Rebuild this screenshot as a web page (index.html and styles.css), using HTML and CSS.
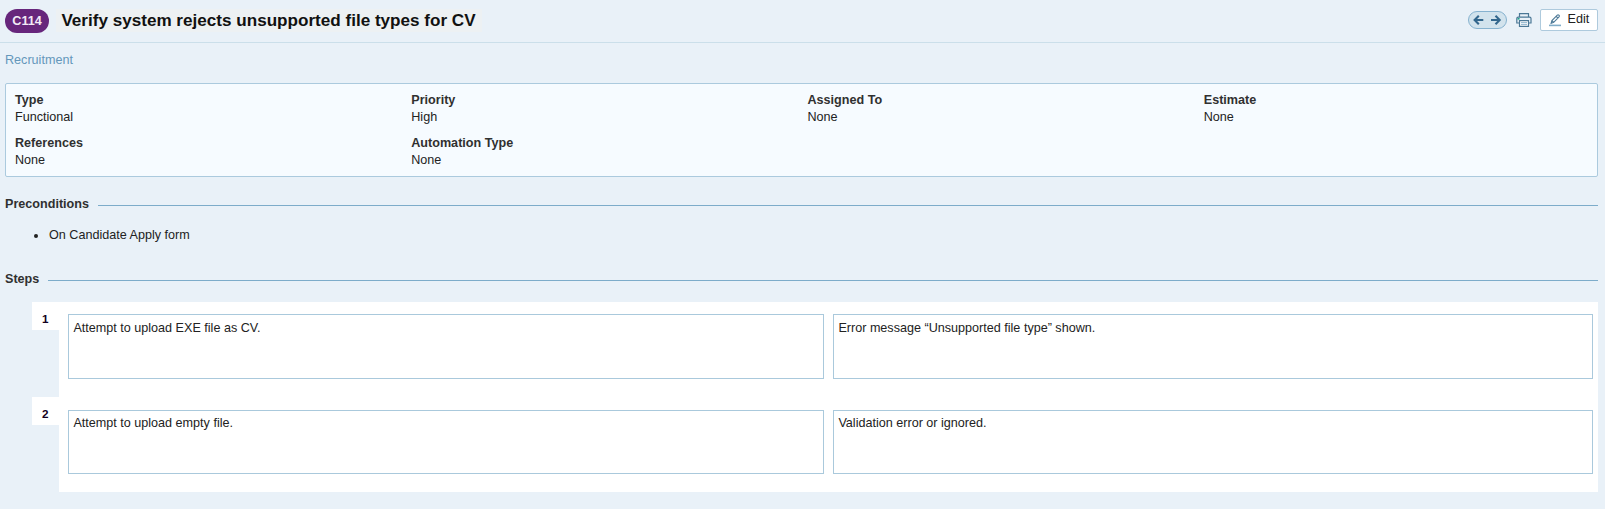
FILE: index.html
```html
<!DOCTYPE html>
<html lang="en">
<head>
<meta charset="utf-8">
<title>Verify system rejects unsupported file types for CV</title>
<link rel="stylesheet" href="styles.css">
</head>
<body>
<header class="header">
  <span class="badge">C114</span>
  <h1 class="title">Verify system rejects unsupported file types for CV</h1>
  <div class="toolbar">
    <div class="pager">
      <svg width="37" height="16" viewBox="0 0 37 16" fill="none" stroke="#33678d" stroke-width="2.1"><path d="M14.3 8H6.2M9.8 3.7 5.6 8l4.2 4.3M22 8h8.1M26.5 3.7 30.7 8l-4.2 4.3"/></svg>
    </div>
    <svg class="printer" width="16" height="16" viewBox="0 0 16 16" fill="none" stroke="#4b7896" stroke-width="1.2"><path d="M3.5 5V1.6h9V5M3.5 11H.8V6.6Q.8 5.2 2.2 5.2h11.4Q15 5.2 15 6.6V11h-2.5"/><path fill="#fff" d="M3.5 8.6h9v5.8h-9z"/><path stroke="#9bbdd3" d="M5 10.5h6M5 12.3h6"/><path stroke="#16a085" stroke-width="1.5" d="M1.6 6.8h2"/></svg>
    <button class="edit"><svg width="14" height="14" viewBox="0 0 14 14" fill="none" stroke="#4b7896" stroke-width="1.1"><path d="M2.1 9.3 2.9 6.5 8.3 1.1q.8-.6 1.6.1t.1 1.6L4.7 8.3zM7.2 2.3l1.7 1.7M2.9 6.5l1.8 1.8"/><path stroke="#82adc9" stroke-width="1.6" d="M0 11.4h12"/></svg><span>Edit</span></button>
  </div>
</header>
<main class="content">
  <a class="section-link">Recruitment</a>
  <dl class="details">
    <div><dt>Type</dt><dd>Functional</dd></div>
    <div><dt>Priority</dt><dd>High</dd></div>
    <div><dt>Assigned To</dt><dd>None</dd></div>
    <div><dt>Estimate</dt><dd>None</dd></div>
    <div><dt>References</dt><dd>None</dd></div>
    <div><dt>Automation Type</dt><dd>None</dd></div>
  </dl>
  <h2 class="heading">Preconditions</h2>
  <ul class="conditions"><li>On Candidate Apply form</li></ul>
  <h2 class="heading">Steps</h2>
  <section class="steps">
    <div class="step first">
      <div class="number">1</div>
      <div class="fields"><div class="field">Attempt to upload EXE file as CV.</div><div class="field">Error message “Unsupported file type” shown.</div></div>
    </div>
    <div class="step">
      <div class="number">2</div>
      <div class="fields"><div class="field">Attempt to upload empty file.</div><div class="field">Validation error or ignored.</div></div>
    </div>
  </section>
</main>
</body>
</html>
```
FILE: styles.css
```css
* { box-sizing: border-box; }
body {
  margin: 0;
  background: #e9f1f8;
  color: #222;
  font: 12.6px/17px "Liberation Sans", Arial, sans-serif;
}
.header {
  display: flex;
  align-items: flex-start;
  height: 43px;
  padding: 9px 7px 0 5px;
  border-bottom: 1px solid #cbdfea;
}
.badge {
  width: 44px;
  height: 24px;
  border-radius: 12px;
  background: #67267c;
  color: #f3eaf6;
  font-weight: bold;
  line-height: 24px;
  text-align: center;
}
.title {
  height: 23px;
  margin: 0 0 0 7px;
  padding: 0 6px 0 5.4px;
  background: #edf1f3;
  color: #111;
  font-size: 17.1px;
  line-height: 23px;
  white-space: nowrap;
}
.toolbar { display: flex; margin-left: auto; }
.pager {
  width: 39px;
  height: 18px;
  margin-top: 2px;
  border: 1px solid #86b2cf;
  border-radius: 9px;
  background: #d2e3ed;
}
.pager svg, .printer { display: block; }
.printer { margin: 3px 8px 0 9px; }
.edit {
  display: flex;
  width: 58px;
  height: 22px;
  padding: 0 0 0 8px;
  border: 1px solid #aecadd;
  border-radius: 2px;
  background: #fff;
  color: #222;
  font: inherit;
  line-height: 19px;
}
.edit svg { margin: 4px 4.5px 0 0; }
.content { padding: 9px 7px 0 5px; }
.section-link { display: block; height: 31px; color: #6497bb; }
.details {
  display: grid;
  grid-template-columns: repeat(4, 396.25px);
  align-content: start;
  row-gap: 9px;
  height: 94px;
  margin: 0;
  padding: 8px 0 0 9px;
  border: 1px solid #abcade;
  border-radius: 2px;
  background: #f6fbff;
}
.details dt { color: #303030; font-weight: bold; }
.details dd { margin: 0; }
.heading {
  display: flex;
  align-items: center;
  gap: 9px;
  margin: 19px 0 0;
  color: #303030;
  font-size: 12.6px;
  line-height: 17px;
}
.heading::after { content: ""; flex: 1; height: 1px; margin-top: 1px; background: #7dacca; }
.conditions { margin: 14px 0 0; padding-left: 29px; list-style: none; }
.conditions li { display: flex; align-items: center; gap: 11px; }
.conditions li::before { content: ""; width: 4px; height: 4px; margin-top: 1px; border-radius: 50%; background: #222; }
.conditions + .heading { margin-top: 27px; }
.steps { margin: 14px 0 0 27px; }
.step { display: flex; height: 95px; }
.number {
  width: 27px;
  height: 28px;
  padding-left: 10px;
  background: #fff;
  color: #120020;
  font-size: 11.7px;
  font-weight: bold;
  line-height: 34px;
}
.fields {
  display: grid;
  flex: 1;
  grid-template-columns: 756px 760px;
  gap: 9px;
  padding: 13px 0 18px 9px;
  background: #fff;
}
.field { padding: 4px 4.4px; border: 1px solid #aac9dc; }
.first .fields { padding-top: 12px; }
.first .field { padding-top: 5px; }
```
